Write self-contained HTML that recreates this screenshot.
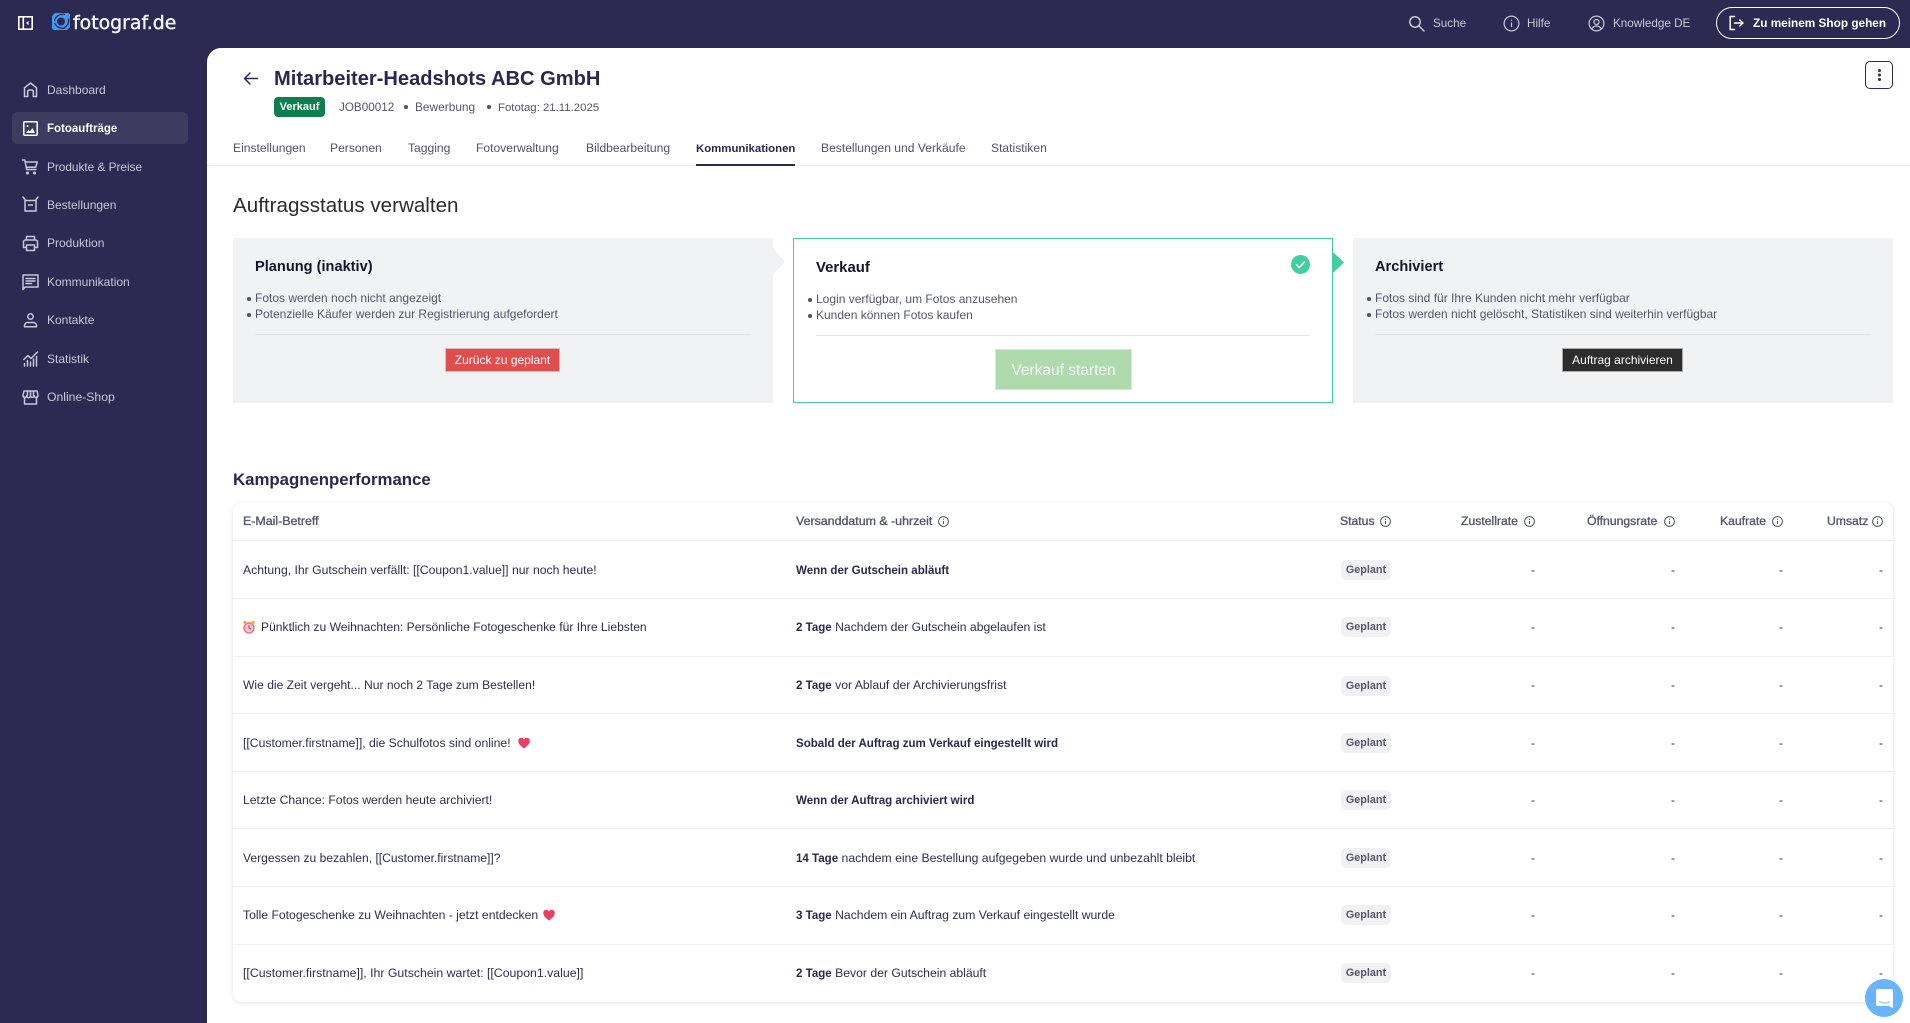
<!DOCTYPE html>
<html lang="de"><head><meta charset="utf-8"><title>fotograf.de</title>
<style>
html,body{margin:0;padding:0;width:1910px;height:1023px;overflow:hidden;background:#2c2a52;font-family:"Liberation Sans",Arial,sans-serif;color:#2c2a52}
div,span,svg{box-sizing:border-box}
.a{position:absolute}
.t{position:absolute;white-space:nowrap;line-height:16px;height:16px;font-size:12px}
.b{font-weight:700}
svg{position:absolute;overflow:visible}
.ic{fill:none;stroke:#c9c8d8;stroke-width:1.5;stroke-linecap:round;stroke-linejoin:round}
.nav{color:#c9c8d8;left:47px}
.tab{top:140px;color:#4f5270;font-size:12.1px}
.card{position:absolute;top:238px;width:540px;height:165px;background:#f1f2f4}
.h{font-size:14.6px;font-weight:700;color:#14142a;top:259px}
.li{color:#54566c}
.dot{position:absolute;width:3.5px;height:3.5px;border-radius:50%;background:#54566c}
.hr{position:absolute;height:1px;background:#e1e3e6}
.th{top:513px;color:#54556f;font-size:12.2px;-webkit-text-stroke:.35px #54556f}
.inf{fill:none;stroke:#54556f;stroke-width:1}
.row{position:absolute;left:233px;width:1660px;border-top:1px solid #f0f0f2;height:58px}
.c1{left:10px;top:21px;font-size:12.2px;color:#2f2d50}
.c2{left:563px;top:21px;font-size:12.2px;color:#2f2d50}
.c2 b{color:#2a284c;font-size:11.55px}
.g{position:absolute;left:1108px;top:19px;width:50px;height:20px;border-radius:5px;background:#f1f1f3;color:#55566f;font-size:10.8px;font-weight:700;line-height:20px;text-align:center}
.d{position:absolute;top:21px;line-height:16px;font-size:12px;width:20px;text-align:right;color:#2c2a52}
.s .c1,.s .c2,.s .d{top:20px}
.s .g{top:18px;line-height:21px}
</style></head><body>

<!-- top bar -->
<svg style="left:18px;top:16px" width="15" height="14" viewBox="0 0 15 14"><rect x=".8" y=".8" width="13.4" height="12.4" fill="none" stroke="#fff" stroke-width="1.6"/><path d="M5.3 1v12" stroke="#fff" stroke-width="1.6"/><path d="M10.5 4.7 8 7l2.5 2.3z" fill="#fff"/></svg>

<svg style="left:52px;top:13px" width="18" height="17" viewBox="0 0 18 17"><path d="M3 0h13.500L18 1.500V14l-3 3H1.500L0 15.500V3z" fill="#3f9bf0"/><circle cx="9" cy="8.500" r="4" fill="#2c2a52"/><path d="M13 1.500C8 .5 3.500 3 2.500 8M16.500 5.500c1 4.500-1.500 8.500-6 10M13 15c-4.500 1-8.500-1-10.500-5" fill="none" stroke="#2c2a52" stroke-width="1.300"/></svg>
<div class="t" style="left:73px;top:12px;height:22px;line-height:22px;font-family:'DejaVu Sans','Liberation Sans',sans-serif;font-size:18.9px;color:#f4f4f8;-webkit-text-stroke:.4px #f4f4f8">fotograf.de</div>

<svg style="left:1408px;top:15px" width="17" height="17" viewBox="0 0 17 17" class="ic"><circle cx="7" cy="7" r="5.2"/><path d="m11 11 5 5"/></svg>
<div class="t" style="left:1433px;top:16px;color:#c9c8d8;font-size:11.7px">Suche</div>
<svg style="left:1503px;top:15px" width="17" height="17" viewBox="0 0 17 17" fill="none" stroke="#c9c8d8" stroke-width="1.2"><circle cx="8.5" cy="8.5" r="7.4"/><path d="M8.5 7.5v4.5M8.5 4.6v1.2"/></svg>
<div class="t" style="left:1527px;top:16px;color:#c9c8d8;font-size:11.7px">Hilfe</div>
<svg style="left:1588px;top:15px" width="17" height="17" viewBox="0 0 17 17" fill="none" stroke="#c9c8d8" stroke-width="1.2"><circle cx="8.5" cy="8.5" r="7.4"/><circle cx="8.5" cy="7" r="2.5"/><path d="M3.8 14c1-2.2 2.6-3 4.7-3s3.7.8 4.7 3"/></svg>
<div class="t" style="left:1613px;top:16px;color:#c9c8d8;font-size:11.7px">Knowledge DE</div>
<div class="a" style="left:1716px;top:7px;width:184px;height:32px;border:1px solid #fff;border-radius:16px"></div>
<svg style="left:1729px;top:15px" width="15" height="16" viewBox="0 0 15 16" fill="none" stroke="#fff" stroke-width="1.5" stroke-linecap="round" stroke-linejoin="round"><path d="M5.5 1.5H1.200v13h4.300M5.500 8h8.500M10.800 5l3.200 3-3.200 3"/></svg>
<div class="t b" style="left:1753px;top:15px;color:#fff;font-size:11.8px">Zu meinem Shop gehen</div>

<!-- sidebar -->
<div class="a" style="left:12px;top:112px;width:176px;height:32px;border-radius:6px;background:#3d3b60"></div>
<svg style="left:22px;top:81px" width="17" height="17" viewBox="0 0 17 17" class="ic"><path d="M2.5 15.5V6.800L8.500 2l6 4.800v8.700h-3.200v-5a1.500 1.500 0 0 0-1.500-1.500H7.200a1.500 1.500 0 0 0-1.500 1.500v5z"/></svg>
<svg style="left:23px;top:121px" width="15" height="15" viewBox="0 0 15 15"><rect x=".8" y=".8" width="13.400" height="13.400" rx="1" fill="none" stroke="#fff" stroke-width="1.500"/><circle cx="4.500" cy="5" r="1" fill="#fff"/><path d="M3 12l2.500-3 1.500 1.500 2.500-3.500L12 12z" fill="#fff"/></svg>
<svg style="left:21px;top:158px" width="18" height="18" viewBox="0 0 18 18" class="ic"><path d="M1.500 2h2.300l1.900 9.500h9.200M4.300 4h12l-1.600 5.200H5.300"/><circle cx="6.500" cy="15" r=".8"/><circle cx="13.500" cy="15" r=".8"/></svg>
<svg style="left:22px;top:196px" width="17" height="16" viewBox="0 0 17 16" class="ic"><path d="M1 1l2 2.500v11.500h11V3.500L16 1M3 4.500h11M6.500 9h4"/></svg>
<svg style="left:22px;top:235px" width="17" height="17" viewBox="0 0 17 17" class="ic"><path d="M4.500 5V1.500h8V5M4.500 12.500H1.500V7a2 2 0 0 1 2-2h10a2 2 0 0 1 2 2v5.500h-3"/><rect x="4.500" y="10" width="8" height="5.500"/></svg>
<svg style="left:22px;top:273px" width="17" height="18" viewBox="0 0 17 18" class="ic"><path d="M1 16.500V2h15v12H3.200zM4 5.500h9M4 8h9M4 10.500h5.500"/></svg>
<svg style="left:23px;top:313px" width="15" height="15" viewBox="0 0 15 15" class="ic"><circle cx="7.500" cy="3.500" r="2.700"/><path d="M1.500 13.800v-1.300c0-1.700 1.500-3 3-3h6c1.500 0 3 1.300 3 3v1.300z"/></svg>
<svg style="left:23px;top:351px" width="16" height="16" viewBox="0 0 16 16" class="ic"><path d="M.8 8.500 5 4.500l3 3L14.500 1M1.500 15v-2.500M4.500 15V9.500M7.500 15v-4M10.500 15V8M13.500 15V5.500"/></svg>
<svg style="left:22px;top:390px" width="17" height="15" viewBox="0 0 17 15" class="ic"><path d="M2.500 7v7h12V7M2 1h13l1 4.500a1.800 1.800 0 0 1-3.800.3 1.900 1.900 0 0 1-3.700 0 1.900 1.900 0 0 1-3.800 0 1.800 1.800 0 0 1-3.700-.3zM5.500 1v4M8.500 1v4M11.500 1v4"/></svg>

<div class="t nav" style="top:82px">Dashboard</div>
<div class="t nav b" style="top:121px;color:#fff;font-size:11.5px">Fotoaufträge</div>
<div class="t nav" style="top:159px;font-size:11.8px">Produkte &amp; Preise</div>
<div class="t nav" style="top:197px">Bestellungen</div>
<div class="t nav" style="top:235px">Produktion</div>
<div class="t nav" style="top:274px">Kommunikation</div>
<div class="t nav" style="top:312px">Kontakte</div>
<div class="t nav" style="top:351px">Statistik</div>
<div class="t nav" style="top:389px;font-size:12.2px">Online-Shop</div>

<!-- main -->
<div class="a" style="left:207px;top:48px;width:1703px;height:975px;background:#fff;border-top-left-radius:14px"></div>

<svg style="left:243px;top:71px" width="16" height="15" viewBox="0 0 16 15" fill="none" stroke="#2c2a52" stroke-width="1.5" stroke-linecap="round" stroke-linejoin="round"><path d="M14.5 7.500H1.500M7 2 1.500 7.500 7 13"/></svg>
<div class="t b" style="left:274px;top:67px;height:24px;line-height:24px;font-size:20.1px;color:#2a2850">Mitarbeiter-Headshots ABC GmbH</div>
<div class="a" style="left:274px;top:97px;width:51px;height:20px;border-radius:4px;background:#0e8050;color:#fff;font-size:11px;font-weight:700;line-height:20px;text-align:center">Verkauf</div>
<div class="t" style="left:339px;top:100px;color:#54566c;font-size:11.7px">JOB00012</div>
<div class="dot" style="left:404px;top:105px"></div>
<div class="t" style="left:415px;top:99px;color:#54566c;font-size:11.9px">Bewerbung</div>
<div class="dot" style="left:487px;top:105px"></div>
<div class="t" style="left:498px;top:100px;color:#54566c;font-size:11.4px">Fototag: 21.11.2025</div>
<div class="a" style="left:1865px;top:61px;width:28px;height:28px;border:1px solid #2c2a52;border-radius:5px"></div>
<div class="dot" style="left:1877.5px;top:69px;width:3px;height:3px;background:#2c2a52;box-shadow:0 4.500px 0 #2c2a52,0 9px 0 #2c2a52"></div>

<div class="a" style="left:207px;top:165px;width:1703px;height:1px;background:#eceded"></div>
<div class="t tab" style="left:233px">Einstellungen</div>
<div class="t tab" style="left:330px">Personen</div>
<div class="t tab" style="left:408px">Tagging</div>
<div class="t tab" style="left:476px">Fotoverwaltung</div>
<div class="t tab" style="left:586px">Bildbearbeitung</div>
<div class="t tab b" style="left:696px;top:141px;color:#2a2850;font-size:11.4px">Kommunikationen</div>
<div class="a" style="left:696px;top:164px;width:99px;height:2px;background:#2c2a52"></div>
<div class="t tab" style="left:821px">Bestellungen und Verkäufe</div>
<div class="t tab" style="left:991px">Statistiken</div>

<div class="t" style="left:233px;top:194px;height:24px;line-height:24px;font-size:20.6px;color:#2b2b33">Auftragsstatus verwalten</div>

<!-- status cards -->
<div class="card" style="left:233px"></div>
<svg style="left:773px;top:248px" width="12" height="27" viewBox="0 0 12 27"><path d="M0 0 12 14 0 27z" fill="#f1f2f4"/></svg>
<div class="t h" style="left:255px">Planung (inaktiv)</div>
<div class="dot" style="left:247px;top:297px"></div><div class="t li" style="left:255px;top:290px">Fotos werden noch nicht angezeigt</div>
<div class="dot" style="left:247px;top:313px"></div><div class="t li" style="left:255px;top:306px">Potenzielle Käufer werden zur Registrierung aufgefordert</div>
<div class="hr" style="left:255px;top:334px;width:496px"></div>
<div class="a" style="left:445px;top:348px;width:115px;height:24px;background:#dd4f4e;border:1px solid #e5b8b8;color:#fff;font-size:12px;line-height:22px;text-align:center">Zurück zu geplant</div>

<div class="card" style="left:793px;background:#fff;border:1px solid #42cfa0"></div>
<svg style="left:1333px;top:252px" width="11" height="21" viewBox="0 0 11 21"><path d="M0 0 11 10.500 0 21z" fill="#42cfa0"/></svg>
<svg style="left:1291px;top:255px" width="19" height="19" viewBox="0 0 19 19"><circle cx="9.500" cy="9.500" r="9.500" fill="#42cfa0"/><path d="m5.500 9.800 2.800 2.700 5.200-5.500" fill="none" stroke="#fff" stroke-width="1.500" stroke-linecap="round" stroke-linejoin="round"/></svg>
<div class="t h" style="left:816px;top:260px;font-size:14.9px">Verkauf</div>
<div class="dot" style="left:808px;top:298px"></div><div class="t li" style="left:816px;top:291px">Login verfügbar, um Fotos anzusehen</div>
<div class="dot" style="left:808px;top:314px"></div><div class="t li" style="left:816px;top:307px">Kunden können Fotos kaufen</div>
<div class="hr" style="left:816px;top:335px;width:494px"></div>
<div class="a" style="left:995px;top:349px;width:137px;height:41px;background:#afdaae;border:1px solid #d5ead5;color:#f5fbf5;font-size:15.5px;line-height:41px;text-align:center">Verkauf starten</div>

<div class="card" style="left:1353px"></div>
<div class="t h" style="left:1375px">Archiviert</div>
<div class="dot" style="left:1367px;top:297px"></div><div class="t li" style="left:1375px;top:290px">Fotos sind für Ihre Kunden nicht mehr verfügbar</div>
<div class="dot" style="left:1367px;top:313px"></div><div class="t li" style="left:1375px;top:306px">Fotos werden nicht gelöscht, Statistiken sind weiterhin verfügbar</div>
<div class="hr" style="left:1375px;top:334px;width:496px"></div>
<div class="a" style="left:1562px;top:348px;width:121px;height:24px;background:#2d2d2d;border:1px solid #a9a9a9;color:#fff;font-size:12px;line-height:22px;text-align:center">Auftrag archivieren</div>

<!-- campaign table -->
<div class="t b" style="left:233px;top:470px;height:20px;line-height:20px;font-size:16.8px;color:#2a2850">Kampagnenperformance</div>
<div class="a" style="left:233px;top:503px;width:1660px;height:499px;background:#fff;border-radius:8px;box-shadow:0 1px 5px rgba(20,20,50,.12)"></div>

<div class="t th" style="left:243px;font-size:12.4px">E-Mail-Betreff</div>
<div class="t th" style="left:796px;font-size:12.4px">Versanddatum &amp; -uhrzeit</div>
<svg style="left:938px;top:516px" width="11" height="11" viewBox="0 0 11 11" class="inf"><circle cx="5.500" cy="5.500" r="4.900"/><path d="M5.500 5v3M5.500 2.800v1"/></svg>
<div class="t th" style="left:1340px">Status</div>
<svg style="left:1380px;top:516px" width="11" height="11" viewBox="0 0 11 11" class="inf"><circle cx="5.500" cy="5.500" r="4.900"/><path d="M5.500 5v3M5.500 2.800v1"/></svg>
<div class="t th" style="left:1461px">Zustellrate</div>
<svg style="left:1524px;top:516px" width="11" height="11" viewBox="0 0 11 11" class="inf"><circle cx="5.500" cy="5.500" r="4.900"/><path d="M5.500 5v3M5.500 2.800v1"/></svg>
<div class="t th" style="left:1587px">Öffnungsrate</div>
<svg style="left:1664px;top:516px" width="11" height="11" viewBox="0 0 11 11" class="inf"><circle cx="5.500" cy="5.500" r="4.900"/><path d="M5.500 5v3M5.500 2.800v1"/></svg>
<div class="t th" style="left:1720px">Kaufrate</div>
<svg style="left:1772px;top:516px" width="11" height="11" viewBox="0 0 11 11" class="inf"><circle cx="5.500" cy="5.500" r="4.900"/><path d="M5.500 5v3M5.500 2.800v1"/></svg>
<div class="t th" style="left:1827px">Umsatz</div>
<svg style="left:1872px;top:516px" width="11" height="11" viewBox="0 0 11 11" class="inf"><circle cx="5.500" cy="5.500" r="4.900"/><path d="M5.500 5v3M5.500 2.800v1"/></svg>

<div class="row" style="top:540px"><div class="t c1">Achtung, Ihr Gutschein verfällt: [[Coupon1.value]] nur noch heute!</div><div class="t c2"><b>Wenn der Gutschein abläuft</b></div><div class="g">Geplant</div><div class="d" style="left:1282px">-</div><div class="d" style="left:1422px">-</div><div class="d" style="left:1530px">-</div><div class="d" style="left:1630px">-</div></div>

<div class="row s" style="top:598px"><svg style="left:10px;top:21px" width="12" height="14" viewBox="0 0 12 14"><circle cx="6" cy="8" r="5" fill="#f7c6d2" stroke="#ee6f8e" stroke-width="1.400"/><path d="M6 5v3l2 1" stroke="#c0415f" fill="none"/><circle cx="2" cy="2.500" r="1.700" fill="#f5b030"/><circle cx="10" cy="2.500" r="1.700" fill="#f5b030"/></svg><div class="t c1" style="left:28px;font-size:12.1px">Pünktlich zu Weihnachten: Persönliche Fotogeschenke für Ihre Liebsten</div><div class="t c2"><b>2 Tage</b> Nachdem der Gutschein abgelaufen ist</div><div class="g">Geplant</div><div class="d" style="left:1282px">-</div><div class="d" style="left:1422px">-</div><div class="d" style="left:1530px">-</div><div class="d" style="left:1630px">-</div></div>

<div class="row s" style="top:656px"><div class="t c1" style="font-size:12.1px">Wie die Zeit vergeht... Nur noch 2 Tage zum Bestellen!</div><div class="t c2"><b>2 Tage</b> vor Ablauf der Archivierungsfrist</div><div class="g" style="top:19px;line-height:20px">Geplant</div><div class="d" style="left:1282px">-</div><div class="d" style="left:1422px">-</div><div class="d" style="left:1530px">-</div><div class="d" style="left:1630px">-</div></div>

<div class="row" style="top:713px"><div class="t c1">[[Customer.firstname]], die Schulfotos sind online!</div><svg style="left:285px;top:23px" width="12" height="12" viewBox="0 0 12 12"><path d="M6 11.500C2 8.500.3 6.500.3 4A3 3 0 0 1 6 2.500 3 3 0 0 1 11.700 4c0 2.500-1.700 4.500-5.700 7.500z" fill="#ef3d60"/></svg><div class="t c2"><b>Sobald der Auftrag zum Verkauf eingestellt wird</b></div><div class="g">Geplant</div><div class="d" style="left:1282px">-</div><div class="d" style="left:1422px">-</div><div class="d" style="left:1530px">-</div><div class="d" style="left:1630px">-</div></div>

<div class="row s" style="top:771px"><div class="t c1">Letzte Chance: Fotos werden heute archiviert!</div><div class="t c2"><b>Wenn der Auftrag archiviert wird</b></div><div class="g">Geplant</div><div class="d" style="left:1282px">-</div><div class="d" style="left:1422px">-</div><div class="d" style="left:1530px">-</div><div class="d" style="left:1630px">-</div></div>

<div class="row" style="top:828px"><div class="t c1" style="font-size:12.1px">Vergessen zu bezahlen, [[Customer.firstname]]?</div><div class="t c2"><b>14 Tage</b> nachdem eine Bestellung aufgegeben wurde und unbezahlt bleibt</div><div class="g">Geplant</div><div class="d" style="left:1282px">-</div><div class="d" style="left:1422px">-</div><div class="d" style="left:1530px">-</div><div class="d" style="left:1630px">-</div></div>

<div class="row s" style="top:886px"><div class="t c1">Tolle Fotogeschenke zu Weihnachten - jetzt entdecken</div><svg style="left:310px;top:22px" width="12" height="12" viewBox="0 0 12 12"><path d="M6 11.500C2 8.500.3 6.500.3 4A3 3 0 0 1 6 2.500 3 3 0 0 1 11.700 4c0 2.500-1.700 4.500-5.700 7.500z" fill="#ef3d60"/></svg><div class="t c2"><b>3 Tage</b> Nachdem ein Auftrag zum Verkauf eingestellt wurde</div><div class="g">Geplant</div><div class="d" style="left:1282px">-</div><div class="d" style="left:1422px">-</div><div class="d" style="left:1530px">-</div><div class="d" style="left:1630px">-</div></div>

<div class="row s" style="top:944px"><div class="t c1" style="font-size:12.3px">[[Customer.firstname]], Ihr Gutschein wartet: [[Coupon1.value]]</div><div class="t c2"><b>2 Tage</b> Bevor der Gutschein abläuft</div><div class="g">Geplant</div><div class="d" style="left:1282px">-</div><div class="d" style="left:1422px">-</div><div class="d" style="left:1530px">-</div><div class="d" style="left:1630px">-</div></div>

<!-- chat -->
<div class="a" style="left:1865px;top:979px;width:38px;height:38px;border-radius:50%;background:#68b5fb"></div>
<svg style="left:1876px;top:989px" width="17" height="19" viewBox="0 0 17 19"><path d="M2 0h13a2 2 0 0 1 2 2v17l-4-2H2a2 2 0 0 1-2-2V2a2 2 0 0 1 2-2z" fill="#fff"/><path d="M3 12.500c3.500 2 7.500 2 11 0" fill="none" stroke="#9ecdf8" stroke-width="1.300"/></svg>
</body></html>
